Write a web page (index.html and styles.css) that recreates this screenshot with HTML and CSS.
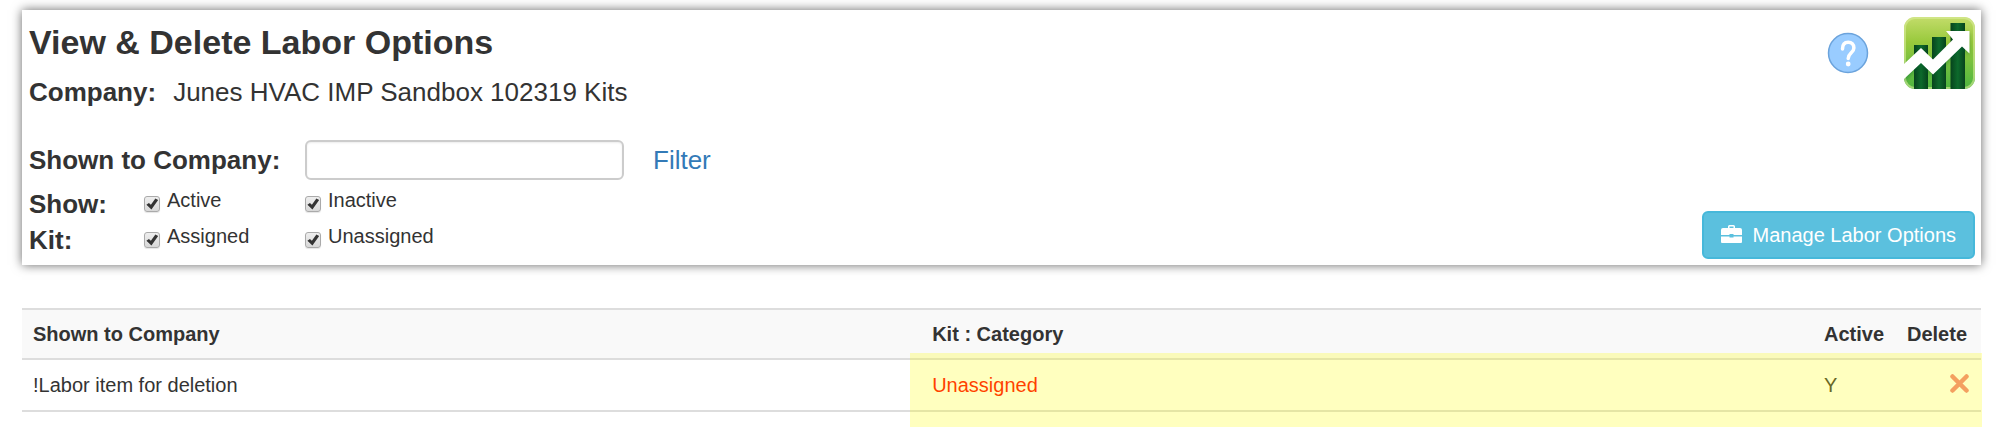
FILE: index.html
```html
<!doctype html>
<html lang="en">
    <head>
        <meta charset="UTF-8" />
        <meta name="viewport" content="width=device-width, initial-scale=1.0" />
        <title>View &amp; Delete Labor Options</title>
        <link rel="stylesheet" href="styles.css" />
    </head>
    <body>
        <header class="panel">
            <div class="panel-main">
                <h1>View &amp; Delete Labor Options</h1>
                <div class="company">
                    <strong>Company:</strong>
                    <span>Junes HVAC IMP Sandbox 102319 Kits</span>
                </div>
                <form class="filters">
                    <label class="name wide" for="shownTo">Shown to Company:</label>
                    <div class="search">
                        <input type="text" id="shownTo" class="text-input" />
                        <a href="#" class="filter-link">Filter</a>
                    </div>

                    <span class="name">Show:</span>
                    <label class="check"><input type="checkbox" checked />Active</label>
                    <label class="check"><input type="checkbox" checked />Inactive</label>

                    <span class="name">Kit:</span>
                    <label class="check"><input type="checkbox" checked />Assigned</label>
                    <label class="check"><input type="checkbox" checked />Unassigned</label>
                </form>
            </div>

            <div class="panel-side">
                <div class="icons">
                    <a href="#" class="help" aria-label="Help">
                        <svg width="42" height="42" viewBox="0 0 42 42">
                            <circle cx="21" cy="21" r="19.5" fill="#99ccff" stroke="#6ba3dc" stroke-width="1.5" />
                            <path d="M15.5 17c0-4.500 2.200-6.800 5.700-6.800s5.700 2.300 5.700 5.700c0 4.800-5.700 5-5.700 10.600" fill="none" stroke="#fff" stroke-width="3.500" stroke-linecap="round" />
                            <circle cx="21.200" cy="32" r="2.400" fill="#fff" />
                        </svg>
                    </a>
                    <svg class="logo" width="71" height="72" viewBox="0 0 71 72">
                        <defs>
                            <linearGradient id="green" x1="0" y1="0" x2="0" y2="1">
                                <stop offset="0" stop-color="#c3dc6a" />
                                <stop offset="0.35" stop-color="#98c93c" />
                                <stop offset="1" stop-color="#4cb540" />
                            </linearGradient>
                            <linearGradient id="bar" x1="0" y1="0" x2="1" y2="0">
                                <stop offset="0" stop-color="#07431d" />
                                <stop offset="0.5" stop-color="#0d6a2c" />
                                <stop offset="1" stop-color="#07431d" />
                            </linearGradient>
                            <clipPath id="tile"><rect width="71" height="72" rx="11" /></clipPath>
                            <filter id="soft"><feGaussianBlur stdDeviation="2" /></filter>
                        </defs>
                        <g clip-path="url(#tile)">
                            <rect width="71" height="72" fill="url(#green)" />
                            <rect x="1" y="1" width="69" height="70" rx="10" fill="none" stroke="#d9eb9a" stroke-opacity="0.6" stroke-width="2" />
                            <rect x="10" y="28" width="14" height="44" fill="url(#bar)" />
                            <rect x="28" y="20" width="14" height="52" fill="url(#bar)" />
                            <rect x="46.500" y="6" width="14.500" height="66" fill="url(#bar)" />
                            <path d="M0 50L17 34l12 12L53 22l-8-6h20v22l-7-7-29 28-12-12L0 64z" fill="#063" opacity="0.5" filter="url(#soft)" />
                            <path d="M0 47L17 31l12 11.500L49 22.500 42 14h23.500v22.500l-7.500-7L29 57.500 17 46 0 62z" fill="#fff" />
                        </g>
                    </svg>
                </div>
                <button type="button" class="manage">
                    <svg width="21" height="22" viewBox="0 0 21 22" fill="#fff">
                        <path d="M7 4V2.500Q7 1 8.500 1h4Q14 1 14 2.500V4h5q2 0 2 2v5h-8.500v-1h-4v1H0V6q0-2 2-2zM8.500 4h4V2.500h-4zM0 12.500h8.500v1h4v-1H21V18q0 1-1 1H1q-1 0-1-1z" fill-rule="evenodd" />
                    </svg>
                    Manage Labor Options
                </button>
            </div>
        </header>

        <main class="list">
            <table>
                <thead>
                    <tr>
                        <th class="col-shown">Shown to Company</th>
                        <th>Kit : Category</th>
                        <th class="col-active">Active</th>
                        <th class="col-delete">Delete</th>
                    </tr>
                </thead>
                <tbody>
                    <tr>
                        <td>!Labor item for deletion</td>
                        <td class="unassigned">Unassigned</td>
                        <td>Y</td>
                        <td>
                            <button type="button" class="delete" aria-label="Delete">
                                <svg width="19" height="22" viewBox="0 0 19 22">
                                    <path d="M2.500 2.500l14 14M16.500 2.500l-14 14" stroke="#f08080" stroke-width="4.500" stroke-linecap="round" />
                                </svg>
                            </button>
                        </td>
                    </tr>
                </tbody>
            </table>
            <div class="highlight"></div>
        </main>
    </body>
</html>
```
FILE: styles.css
```css
* {
    box-sizing: border-box;
}
body {
    display: flex;
    flex-direction: column;
    min-height: 100vh;
    margin: 0;
    padding: 10px 18px 0 22px;
    background: #fff;
    color: #333;
    font-family: "Liberation Sans", Arial, sans-serif;
    font-size: 20px;
    line-height: 30px;
}
a {
    color: #337ab7;
    text-decoration: none;
}

/* top panel */
.panel {
    display: flex;
    justify-content: space-between;
    padding: 7px 6px 6px 7px;
    box-shadow: 0 0 10px rgba(0, 0, 0, 0.6);
}
h1 {
    margin: 5px 0 12px;
    font-size: 34px;
    line-height: 40px;
}
.company {
    display: flex;
    gap: 17px;
    margin-bottom: 30px;
    font-size: 26px;
    line-height: 36px;
}
.filters {
    display: grid;
    grid-template-columns: 115px 161px auto;
    margin-bottom: 1px;
}
.name {
    font-size: 26px;
    font-weight: bold;
    line-height: 36px;
}
.wide {
    grid-column: span 2;
    line-height: 40px;
}
.search {
    display: flex;
    align-items: center;
    gap: 29px;
    margin-bottom: 6px;
}
.text-input {
    width: 319px;
    height: 40px;
    padding: 6px 12px;
    border: 2px solid #ccc;
    border-radius: 6px;
    box-shadow: inset 0 1px 2px rgba(0, 0, 0, 0.08);
    font: inherit;
    color: #555;
}
.filter-link {
    font-size: 26px;
    line-height: 36px;
}
.check {
    display: flex;
    align-items: flex-start;
    gap: 7px;
    line-height: 28px;
}
.check input {
    appearance: none;
    width: 16px;
    height: 16px;
    margin: 10px 0 0;
    border: 1px solid #aaa;
    border-radius: 3px;
    background: linear-gradient(#eee, #d8d8d8);
    box-shadow: 0 1px 1px rgba(0, 0, 0, 0.1);
}
.check input:checked::before {
    content: "";
    display: block;
    height: 14px;
    background: #333;
    clip-path: polygon(10% 56%, 28% 42%, 42% 56%, 74% 10%, 94% 22%, 46% 90%);
}
.panel-side {
    display: flex;
    flex-direction: column;
    justify-content: space-between;
    align-items: flex-end;
}
.icons {
    display: flex;
    align-items: center;
    gap: 35px;
}
.icons svg,
.manage svg,
.delete svg {
    display: block;
}
.manage {
    display: flex;
    align-items: center;
    gap: 11px;
    height: 48px;
    padding: 0 17px;
    border: 2px solid #46b8da;
    border-radius: 6px;
    background: #5bc0de;
    color: #fff;
    font: inherit;
    cursor: pointer;
}

/* results */
.list {
    position: relative;
    flex: 1;
    margin-top: 43px;
}
table {
    width: 100%;
    table-layout: fixed;
    border-collapse: separate;
    border-spacing: 0;
}
th,
td {
    height: 52px;
    padding: 0 12px 0 11px;
    border-bottom: 2px solid #ddd;
    text-align: left;
}
th {
    border-top: 2px solid #ddd;
    background: #f9f9f9;
}
.col-shown {
    width: 45.9%;
}
.col-active {
    width: 83px;
}
.col-delete {
    width: 85px;
}
.unassigned {
    color: #f00;
}
.delete {
    display: block;
    margin-left: auto;
    padding: 0;
    border: 0;
    background: none;
    cursor: pointer;
}
.highlight {
    position: absolute;
    top: 45px;
    right: -1px;
    bottom: 0;
    left: 45.35%;
    background: rgba(255, 255, 0, 0.25);
    pointer-events: none;
}
```
